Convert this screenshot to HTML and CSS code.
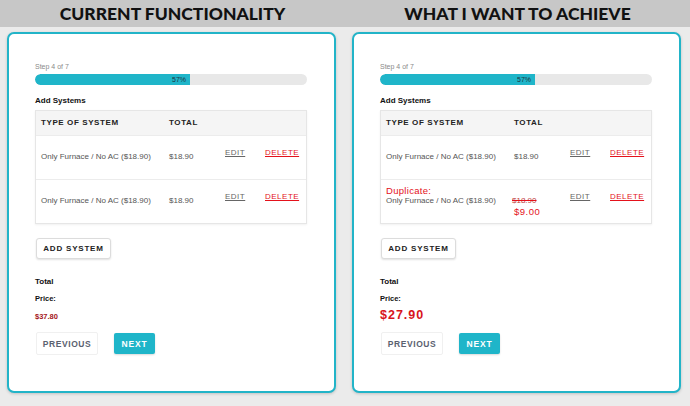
FILE: index.html
```html
<!DOCTYPE html>
<html lang="en">
<head>
<meta charset="utf-8">
<title>Add Systems – comparison</title>
<link rel="stylesheet" href="styles.css">
</head>
<body>
  <header class="band">
    <h1 class="band-title">CURRENT FUNCTIONALITY</h1>
    <h1 class="band-title">WHAT I WANT TO ACHIEVE</h1>
  </header>
  <main class="panes">
    <div class="pane">
      <section class="card">
        <div class="step">Step 4 of 7</div>
        <div class="progress"><div class="progress-fill" style="width:57%"><span>57%</span></div></div>
        <h2 class="section-title">Add Systems</h2>
        <div class="tbl">
          <div class="tr thead">
            <div class="td">TYPE OF SYSTEM</div>
            <div class="td">TOTAL</div>
            <div class="td"></div>
            <div class="td"></div>
          </div>
          <div class="tr">
            <div class="td">Only Furnace / No AC ($18.90)</div>
            <div class="td">$18.90</div>
            <div class="td act"><a class="edit">EDIT</a></div>
            <div class="td act"><a class="del">DELETE</a></div>
          </div>
          <div class="tr">
            <div class="td">Only Furnace / No AC ($18.90)</div>
            <div class="td">$18.90</div>
            <div class="td act"><a class="edit">EDIT</a></div>
            <div class="td act"><a class="del">DELETE</a></div>
          </div>
        </div>
        <button class="btn btn-add">ADD SYSTEM</button>
        <div class="total-label">Total</div>
        <div class="price-label">Price:</div>
        <div class="price"><span class="price-small">$37.80</span></div>
        <div class="nav">
          <button class="btn btn-prev">PREVIOUS</button>
          <button class="btn btn-next">NEXT</button>
        </div>
      </section>
    </div>
    <div class="pane">
      <section class="card">
        <div class="step">Step 4 of 7</div>
        <div class="progress"><div class="progress-fill" style="width:57%"><span>57%</span></div></div>
        <h2 class="section-title">Add Systems</h2>
        <div class="tbl">
          <div class="tr thead">
            <div class="td">TYPE OF SYSTEM</div>
            <div class="td">TOTAL</div>
            <div class="td"></div>
            <div class="td"></div>
          </div>
          <div class="tr">
            <div class="td">Only Furnace / No AC ($18.90)</div>
            <div class="td">$18.90</div>
            <div class="td act"><a class="edit">EDIT</a></div>
            <div class="td act"><a class="del">DELETE</a></div>
          </div>
          <div class="tr">
            <div class="td td-dup"><div class="dup">Duplicate:</div>Only Furnace / No AC ($18.90)</div>
            <div class="td"><div class="old">$18.90</div><div class="new">$9.00</div></div>
            <div class="td act"><a class="edit">EDIT</a></div>
            <div class="td act"><a class="del">DELETE</a></div>
          </div>
        </div>
        <button class="btn btn-add">ADD SYSTEM</button>
        <div class="total-label">Total</div>
        <div class="price-label">Price:</div>
        <div class="price"><span class="price-big">$27.90</span></div>
        <div class="nav">
          <button class="btn btn-prev">PREVIOUS</button>
          <button class="btn btn-next">NEXT</button>
        </div>
      </section>
    </div>
  </main>
</body>
</html>
```
FILE: styles.css
```css
* { box-sizing: border-box; }
html, body { margin: 0; padding: 0; }
body {
  background: #ebebeb;
  font-family: "Liberation Sans", Arial, sans-serif;
  width: 690px;
  height: 406px;
  overflow: hidden;
}
.band {
  height: 27px;
  background: #c7c7c7;
  display: grid;
  grid-template-columns: 345px 345px;
  align-items: center;
}
.band-title {
  margin: 0;
  text-align: center;
  font-family: Lato, "Liberation Sans", sans-serif;
  font-weight: 900;
  font-size: 17.5px;
  line-height: 28px;
  color: #111;
  letter-spacing: 0;
}
.panes {
  display: grid;
  grid-template-columns: 345px 345px;
  padding-top: 5px;
}
.pane { padding: 0 9px 0 7px; }
.card {
  height: 361px;
  background: #fff;
  border: 2px solid #22b4c8;
  border-radius: 7px;
  box-shadow: 0 1px 3px rgba(0,0,0,0.18);
  padding: 28px 27px 0 26px;
}
.step {
  font-size: 7px;
  line-height: 9px;
  color: #8a8a8a;
}
.progress {
  margin-top: 3px;
  height: 11px;
  background: #e8e8e8;
  border-radius: 6px;
  overflow: hidden;
}
.progress-fill {
  height: 100%;
  background: #1fb5c9;
  border-radius: 6px 0 0 6px;
  text-align: right;
  padding-right: 4px;
  font-size: 7px;
  line-height: 11px;
  color: #1d3340;
}
.section-title {
  margin: 11px 0 0;
  font-size: 8px;
  line-height: 10px;
  font-weight: bold;
  color: #111;
}
.tbl {
  margin-top: 4px;
  border: 1px solid #e6e6e6;
  box-shadow: 0 1px 2px rgba(0,0,0,0.06);
}
.tr {
  display: grid;
  grid-template-columns: 128px 56px 40px 1fr;
  height: 44px;
  border-top: 1px solid #ececec;
  font-size: 8px;
  line-height: 10px;
  color: #555;
}
.thead {
  height: 24px;
  border-top: 0;
  background: #f5f5f5;
  align-items: center;
  font-weight: bold;
  letter-spacing: 0.6px;
  color: #222;
}
.td { padding-left: 5px; padding-top: 16px; white-space: nowrap; }
.thead .td { padding-top: 0; }
.td.act { padding-top: 12px; letter-spacing: 0.5px; }
.td-dup { padding-top: 6px; }
.dup {
  color: #e4121b;
  font-size: 9.5px;
  line-height: 10px;
  letter-spacing: 0.3px;
}
.old {
  color: #c23a3a;
  text-decoration: line-through;
  text-decoration-color: #e4121b;
  text-decoration-thickness: 1px;
  margin-left: -2px;
}
.new {
  color: #e4121b;
  font-size: 9.5px;
  line-height: 11px;
  letter-spacing: 0.5px;
  padding-left: 0;
}
.edit { color: #666; text-decoration: underline; }
.del { color: #e4121b; text-decoration: underline; }
.btn {
  font-family: "Liberation Sans", Arial, sans-serif;
  font-weight: bold;
  font-size: 8px;
  letter-spacing: 0.8px;
  cursor: pointer;
  display: block;
  padding: 0;
}
.btn-add {
  margin-top: 14px;
  margin-left: 1px;
  width: 75px;
  height: 21px;
  background: #fff;
  border: 1px solid #dcdcdc;
  border-radius: 3px;
  box-shadow: 0 1px 2px rgba(0,0,0,0.12);
  color: #222;
}
.total-label {
  margin-top: 18px;
  font-size: 8px;
  line-height: 10px;
  font-weight: bold;
  color: #111;
}
.price-label {
  margin-top: 7px;
  font-size: 7.5px;
  line-height: 10px;
  font-weight: bold;
  color: #111;
}
.price {
  margin-top: 2px;
  height: 15px;
  line-height: 15px;
}
.price-small {
  font-size: 7.5px;
  font-weight: bold;
  color: #a5161a;
}
.price-big {
  font-size: 12.5px;
  font-weight: bold;
  color: #d8141c;
  letter-spacing: 1px;
}
.nav {
  margin-top: 11px;
  margin-left: 1px;
  display: flex;
  gap: 16px;
  align-items: flex-start;
}
.btn-prev {
  width: 62px;
  height: 23px;
  background: #fff;
  border: 1px solid #f0f0f0;
  border-radius: 2px;
  color: #5b6170;
  font-size: 8.5px;
  letter-spacing: 0.6px;
}
.btn-next {
  margin-top: 1px;
  width: 41px;
  height: 21px;
  background: #1fb5c9;
  border: 0;
  border-radius: 2px;
  box-shadow: 0 1px 2px rgba(0,0,0,0.15);
  color: #fff;
  font-size: 8.5px;
  letter-spacing: 0.8px;
}
```
